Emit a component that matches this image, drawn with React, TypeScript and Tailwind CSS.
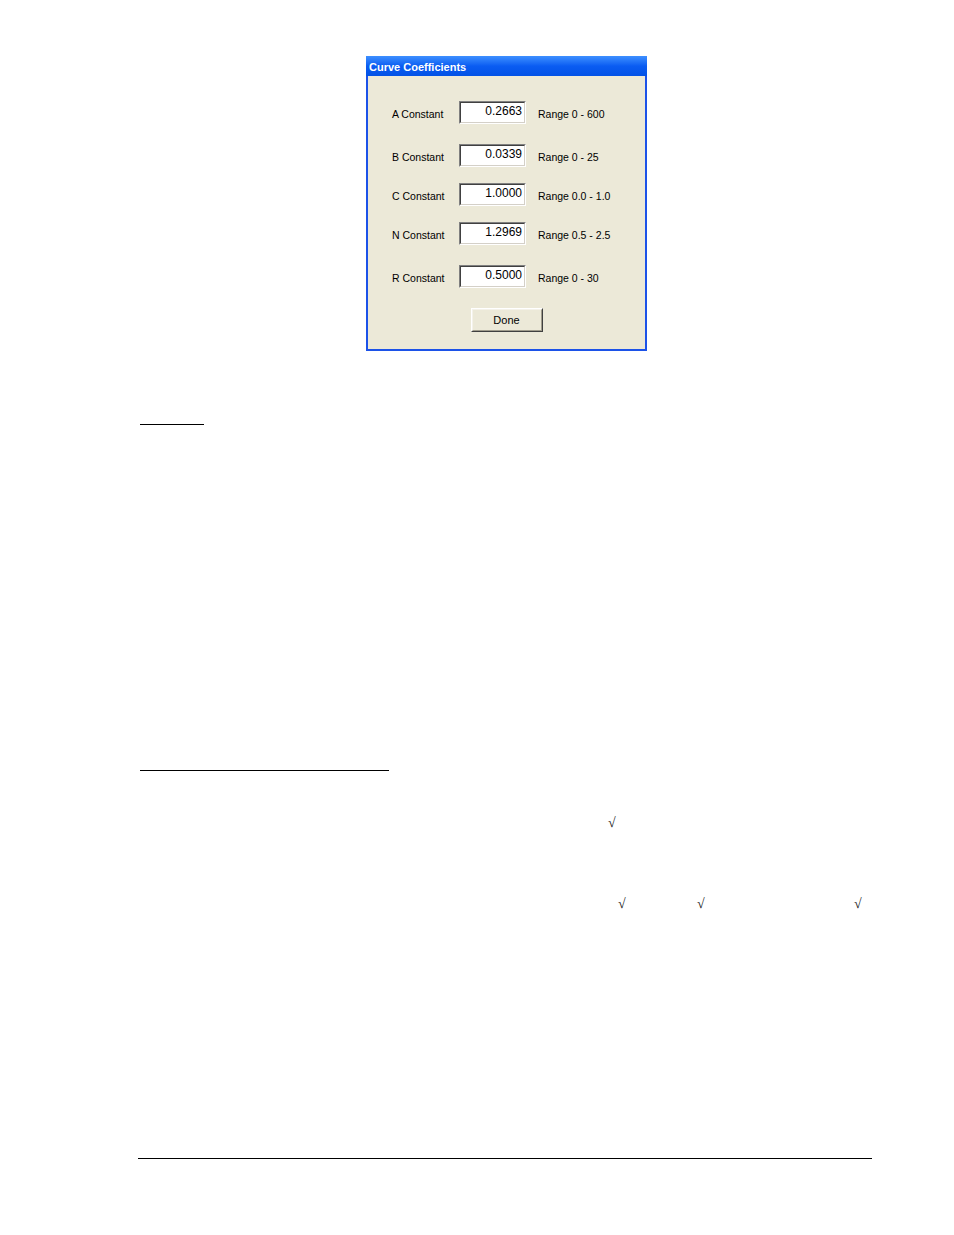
import React from 'react';

// Coefficient rows shown in the dialog
const COEFFICIENTS = [
  { label: 'A Constant', value: '0.2663', range: 'Range 0 - 600', gap: 'mt-0' },
  { label: 'B Constant', value: '0.0339', range: 'Range 0 - 25', gap: 'mt-[20px]' },
  { label: 'C Constant', value: '1.0000', range: 'Range 0.0 - 1.0', gap: 'mt-[16px]' },
  { label: 'N Constant', value: '1.2969', range: 'Range 0.5 - 2.5', gap: 'mt-[16px]' },
  { label: 'R Constant', value: '0.5000', range: 'Range 0 - 30', gap: 'mt-[20px]' },
];

const sans = { fontFamily: '"Liberation Sans", Arial, sans-serif' };
const serif = { fontFamily: '"Liberation Serif", "Times New Roman", serif' };

const CoefficientRow: React.FC<{ label: string; value: string; range: string; gap: string }> = ({
  label,
  value,
  range,
  gap,
}) => (
  <div className={`flex h-[23px] items-center ${gap}`}>
    <span className="w-[67px] pt-[3px] text-[10.5px] leading-[14px] text-black">{label}</span>
    {/* sunken edit box */}
    <div className="h-[23px] w-[67px] border border-t-[#808080] border-l-[#808080] border-b-white border-r-white">
      <div className="flex h-full w-full items-start justify-end border border-t-[#404040] border-l-[#404040] border-b-[#d4d0c8] border-r-[#d4d0c8] bg-white pr-[2px] pt-[1px]">
        <span className="text-[12px] leading-[14px] text-black">{value}</span>
      </div>
    </div>
    <span className="ml-[12px] pt-[3px] text-[10.5px] leading-[14px] text-black">{range}</span>
  </div>
);

const CurveCoefficientsDialog: React.FC = () => (
  <div className="ml-[366px] w-[281px] border-x-2 border-b-2 border-[#1c52e8]" style={sans}>
    {/* title bar */}
    <div className="-mx-[2px] flex h-[20px] items-center bg-linear-to-b from-[#3d8fff] via-[#0a5cf2] to-[#0352e6] px-[3px] pt-[3px]">
      <span className="text-[11px] font-bold leading-none text-white">Curve Coefficients</span>
    </div>

    <div className="flex flex-col bg-[#ece9d8] pb-[17px] pl-[24px] pt-[25px]">
      {COEFFICIENTS.map((c) => (
        <CoefficientRow key={c.label} {...c} />
      ))}

      <div className="mt-[20px] flex justify-center pr-[24px]">
        <button
          type="button"
          className="h-[24px] w-[72px] border border-t-white border-l-white border-b-[#404040] border-r-[#404040] bg-[#ece9d8]"
        >
          <div className="flex h-full w-full items-center justify-center border border-t-[#f4f2ea] border-l-[#f4f2ea] border-b-[#a09c8c] border-r-[#a09c8c]">
            <span className="text-[11px] leading-none text-black">Done</span>
          </div>
        </button>
      </div>
    </div>
  </div>
);

export default function App() {
  return (
    <div className="min-h-[1235px] w-[954px] bg-white pt-[56px]">
      <CurveCoefficientsDialog />

      {/* section heading underline */}
      <div className="ml-[140px] mt-[73px] h-px w-[64px] bg-black" />

      {/* second heading underline */}
      <div className="ml-[140px] mt-[345px] h-px w-[249px] bg-black" />

      {/* check marks */}
      <div className="mt-[44px] flex h-[16px] pl-[608px] text-[14px] leading-[16px] text-[#222]" style={serif}>
        <span className="w-[8px]">√</span>
      </div>
      <div className="mt-[65px] flex h-[16px] pl-[618px] text-[14px] leading-[16px] text-[#222]" style={serif}>
        <span className="w-[8px]">√</span>
        <span className="ml-[71px] w-[8px]">√</span>
        <span className="ml-[149px] w-[8px]">√</span>
      </div>

      {/* footer rule */}
      <div className="ml-[138px] mt-[246px] h-px w-[734px] bg-black" />
    </div>
  );
}
